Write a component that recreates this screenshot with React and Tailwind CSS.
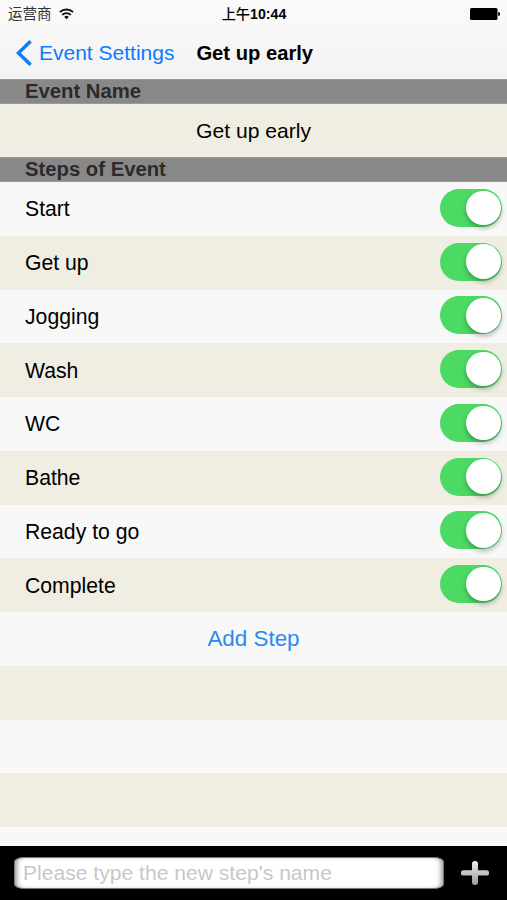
import React from "react";

const STEPS = [
  "Start",
  "Get up",
  "Jogging",
  "Wash",
  "WC",
  "Bathe",
  "Ready to go",
  "Complete",
];

function StatusBar() {
  return (
    <div className="grid h-[27px] grid-cols-3 items-center pl-2 pr-[7px] text-black">
      <div className="flex items-center gap-[7px]">
        <span className="text-[14.5px] leading-[27px] text-[#333]">运营商</span>
        <svg className="h-[12px] w-[15px]" viewBox="0 0 15 12" fill="none">
          <path d="M0.9 4.2a9.3 9.3 0 0 1 13.2 0" stroke="#111" strokeWidth="1.9" />
          <path d="M3.2 6.8a6.1 6.1 0 0 1 8.6 0" stroke="#111" strokeWidth="1.8" />
          <path d="M7.500 11.200L5.200 8.900a3.300 3.300 0 0 1 4.600 0z" fill="#111" />
        </svg>
      </div>
      <span className="whitespace-nowrap pt-px text-center text-[14.2px] font-medium leading-[27px]">
        上午<span className="font-bold">10:44</span>
      </span>
      <svg className="h-[12px] w-[30px] justify-self-end" viewBox="0 0 30 12">
        <rect x="0" y="0" width="27.5" height="12" rx="1.5" fill="#000" />
        <path d="M28.2 4v4a2 2 0 0 0 0-4z" fill="#000" />
      </svg>
    </div>
  );
}

function NavBar() {
  return (
    <div className="flex h-[52px] items-center pl-4">
      <button type="button" className="flex items-center gap-[7px] text-[#0a7cff]">
        <svg className="h-[26px] w-4" viewBox="0 0 16 26" fill="none">
          <path d="M14.6 1.2L2.4 13l12.2 11.8" stroke="currentColor" strokeWidth="3.4" />
        </svg>
        <span className="whitespace-nowrap text-[21px] leading-[52px]">Event Settings</span>
      </button>
      <h1 className="ml-[22px] whitespace-nowrap text-[20.2px] font-bold leading-[52px]">
        Get up early
      </h1>
    </div>
  );
}

function SectionHeader({ title }) {
  return (
    <h2 className="h-[24.75px] border-y border-[#999] bg-[#888] pl-[25px] text-[20.3px] font-bold leading-[23px] text-[#2b2b2b]">
      {title}
    </h2>
  );
}

function Switch() {
  return (
    <button
      type="button"
      role="switch"
      aria-checked="true"
      className="mb-[2px] flex h-[38px] w-[62px] items-center justify-end rounded-full bg-[#4cd964] pr-[1.5px]"
    >
      <span className="size-[34.5px] rounded-full bg-white shadow-[0_3px_5px_rgba(0,0,0,0.28)]" />
    </button>
  );
}

export default function App() {
  return (
    <div className="flex h-[900px] w-[507px] flex-col overflow-hidden bg-[#f8f8f8] font-['Liberation_Sans','Noto_Sans_CJK_SC',sans-serif] text-black">
      <header className="h-[79px] shrink-0 bg-linear-to-b from-[#fafafa] to-[#f3f3f3]">
        <StatusBar />
        <NavBar />
      </header>

      <main className="min-h-0 flex-1 overflow-hidden">
        <SectionHeader title="Event Name" />
        <div className="h-[53.5px] bg-[#f0eee2] text-center text-[21.1px] leading-[54px]">
          Get up early
        </div>

        <SectionHeader title="Steps of Event" />
        <ul>
          {STEPS.map((step) => (
            <li
              key={step}
              className="flex h-[53.75px] items-center justify-between pl-[25px] pr-[5px] odd:bg-[#f8f8f8] even:bg-[#f0eee2]"
            >
              <span className="pt-px text-[21.2px] leading-[54px]">{step}</span>
              <Switch />
            </li>
          ))}
        </ul>
        <button
          type="button"
          className="block h-[53.75px] w-full text-center text-[22.4px] leading-[54px] text-[#2a8af5]"
        >
          Add Step
        </button>

        {/* Empty rows */}
        <div className="h-[53.75px] bg-[#f0eee2]" />
        <div className="h-[53.75px]" />
        <div className="h-[53.75px] bg-[#f0eee2]" />
      </main>

      <footer className="flex h-[54px] shrink-0 items-center bg-black pl-3.5">
        <input
          type="text"
          placeholder="Please type the new step's name"
          className="h-[32px] w-[430px] rounded-[10px/5px] border border-[#777] bg-white px-2 text-[21.1px] shadow-[inset_5px_0_5px_-3px_#999,inset_-5px_0_5px_-3px_#999] placeholder:text-[#c7c7cc]"
        />
        <button type="button" aria-label="Add step" className="ml-4">
          <svg className="h-6 w-[30px]" viewBox="0 0 30 24">
            <defs>
              <linearGradient id="plus" x1="0" y1="0" x2="0" y2="24" gradientUnits="userSpaceOnUse">
                <stop offset="0" stopColor="#eee" />
                <stop offset="1" stopColor="#999" />
              </linearGradient>
            </defs>
            <path
              d="M12 2.500a3 2.500 0 0 1 6 0V9.300h8.500a2.600 2.600 0 0 1 0 5.200H18v7a3 2.500 0 0 1-6 0v-7H3.500a2.600 2.600 0 0 1 0-5.200H12z"
              fill="url(#plus)"
            />
          </svg>
        </button>
      </footer>
    </div>
  );
}
